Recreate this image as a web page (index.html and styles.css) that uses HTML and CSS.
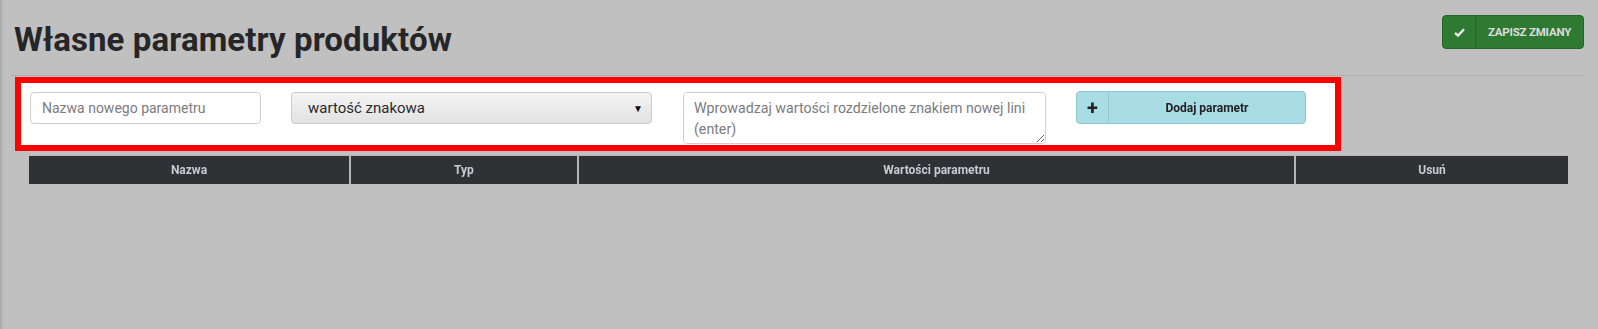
FILE: index.html
```html
<!DOCTYPE html>
<html lang="pl">
<head>
  <meta charset="UTF-8" />
  <title>Własne parametry produktów</title>
  <link rel="stylesheet" href="styles.css">
</head>
<body>
  <div class="page">
    <div class="topbar">
      <h1>Własne parametry produktów</h1>
      <button class="btn-save">
        <span class="btn-icon">
          <svg width="11" height="9" viewBox="0 0 11 9"><path d="M1 4.8 L4 7.6 L10 1.2" fill="none" stroke="#e8e8e8" stroke-width="2.4"/></svg>
        </span>
        <span class="btn-label">ZAPISZ ZMIANY</span>
      </button>
    </div>

    <div class="form-box">
      <input type="text" class="field name-field" placeholder="Nazwa nowego parametru">
      <div class="select-field">
        <span>wartość znakowa</span>
        <span class="arrow">▼</span>
      </div>
      <textarea class="field values-field" placeholder="Wprowadzaj wartości rozdzielone znakiem nowej lini (enter)"></textarea>
      <button class="btn-add">
        <span class="btn-icon">+</span>
        <span class="btn-label">Dodaj parametr</span>
      </button>
    </div>

    <table class="params">
      <thead>
        <tr>
          <th class="col-name">Nazwa</th>
          <th class="col-type">Typ</th>
          <th class="col-values">Wartości parametru</th>
          <th class="col-del">Usuń</th>
        </tr>
      </thead>
    </table>
  </div>
</body>
</html>
```

FILE: styles.css
```css
:root {
  --bg: #c0c0c0;
  --text: #2a2a2c;
  --head-bg: #303134;
  --head-text: #c6cad2;
  --green: #2f7a33;
  --cyan: #a9dde6;
}

* {
  margin: 0;
  padding: 0;
  box-sizing: border-box;
}

body {
  background: linear-gradient(to right, #a9a9a9 0, #bcbcbc 3px, var(--bg) 5px);
  font-family: Roboto, "Liberation Sans", sans-serif;
  color: var(--text);
  height: 329px;
  overflow: hidden;
}

.page {
  padding: 0 14px 0 12px;
}

.topbar {
  height: 76px;
  display: flex;
  justify-content: space-between;
  align-items: flex-start;
  border-bottom: 1px dotted #9c9c9c;
}

h1 {
  font-size: 33px;
  font-weight: 700;
  margin: 20px 0 0 2px;
  letter-spacing: 0.1px;
  color: #262628;
}

.btn-save {
  margin-top: 15px;
  height: 34px;
  width: 142px;
  display: flex;
  background: var(--green);
  border: 1px solid #24662a;
  border-radius: 4px;
  color: #dcdcdc;
  font-family: Roboto, sans-serif;
}

.btn-save .btn-icon {
  width: 33px;
  height: 100%;
  display: flex;
  align-items: center;
  justify-content: center;
  border-right: 1px solid #25662a;
}

.btn-save .btn-label {
  flex: 1;
  align-self: center;
  font-size: 11.5px;
  font-weight: 700;
  letter-spacing: -0.2px;
}

.form-box {
  margin: 1px 0 0 3px;
  width: 1326px;
  height: 74px;
  border: 6px solid #ff0000;
  background: #fff;
  padding: 9px 0 0 9px;
  display: flex;
  align-items: flex-start;
  gap: 30px;
}

.field {
  border: 1px solid #cfcfcf;
  border-radius: 4px;
  background: #fff;
  font-family: Roboto, sans-serif;
  font-size: 14px;
  color: #555;
  outline: none;
}

.field::placeholder {
  color: #7c7c7c;
}

.name-field {
  width: 231px;
  height: 32px;
  padding: 0 11px;
}

.select-field {
  width: 361px;
  height: 32px;
  border: 1px solid #cccccc;
  border-radius: 4px;
  background: linear-gradient(#f4f4f4, #e2e2e2);
  display: flex;
  align-items: center;
  justify-content: space-between;
  padding: 0 8px 0 16px;
  font-size: 15px;
  color: #2a2a2a;
}

.select-field .arrow {
  font-size: 10px;
  color: #111;
}

.values-field {
  margin-left: 1px;
  width: 363px;
  height: 52px;
  padding: 5px 10px;
  font-size: 14.2px;
  line-height: 21px;
  resize: vertical;
}

.btn-add {
  width: 230px;
  height: 33px;
  display: flex;
  background: var(--cyan);
  border: 1px solid #8fc6d1;
  border-radius: 4px;
  color: #222;
  font-family: Roboto, sans-serif;
  margin-top: -1px;
}

.btn-add .btn-icon {
  width: 32px;
  height: 100%;
  display: flex;
  align-items: center;
  justify-content: center;
  border-right: 1px solid #93c9d3;
  font-size: 20px;
  font-weight: 700;
}

.btn-add .btn-label {
  flex: 1;
  align-self: center;
  font-size: 12px;
  font-weight: 700;
}

.params {
  margin: 4px 0 0 17px;
  width: 1539px;
  border-collapse: collapse;
}

.params th {
  background: var(--head-bg);
  color: var(--head-text);
  font-size: 12px;
  font-weight: 700;
  height: 28px;
  border-left: 2px solid #b4b4b4;
  border-top: 1px solid #b8b8b8;
}

.params th:first-child {
  border-left: none;
}

.col-name { width: 321px; }
.col-type { width: 228px; }
.col-values { width: 717px; }
```
